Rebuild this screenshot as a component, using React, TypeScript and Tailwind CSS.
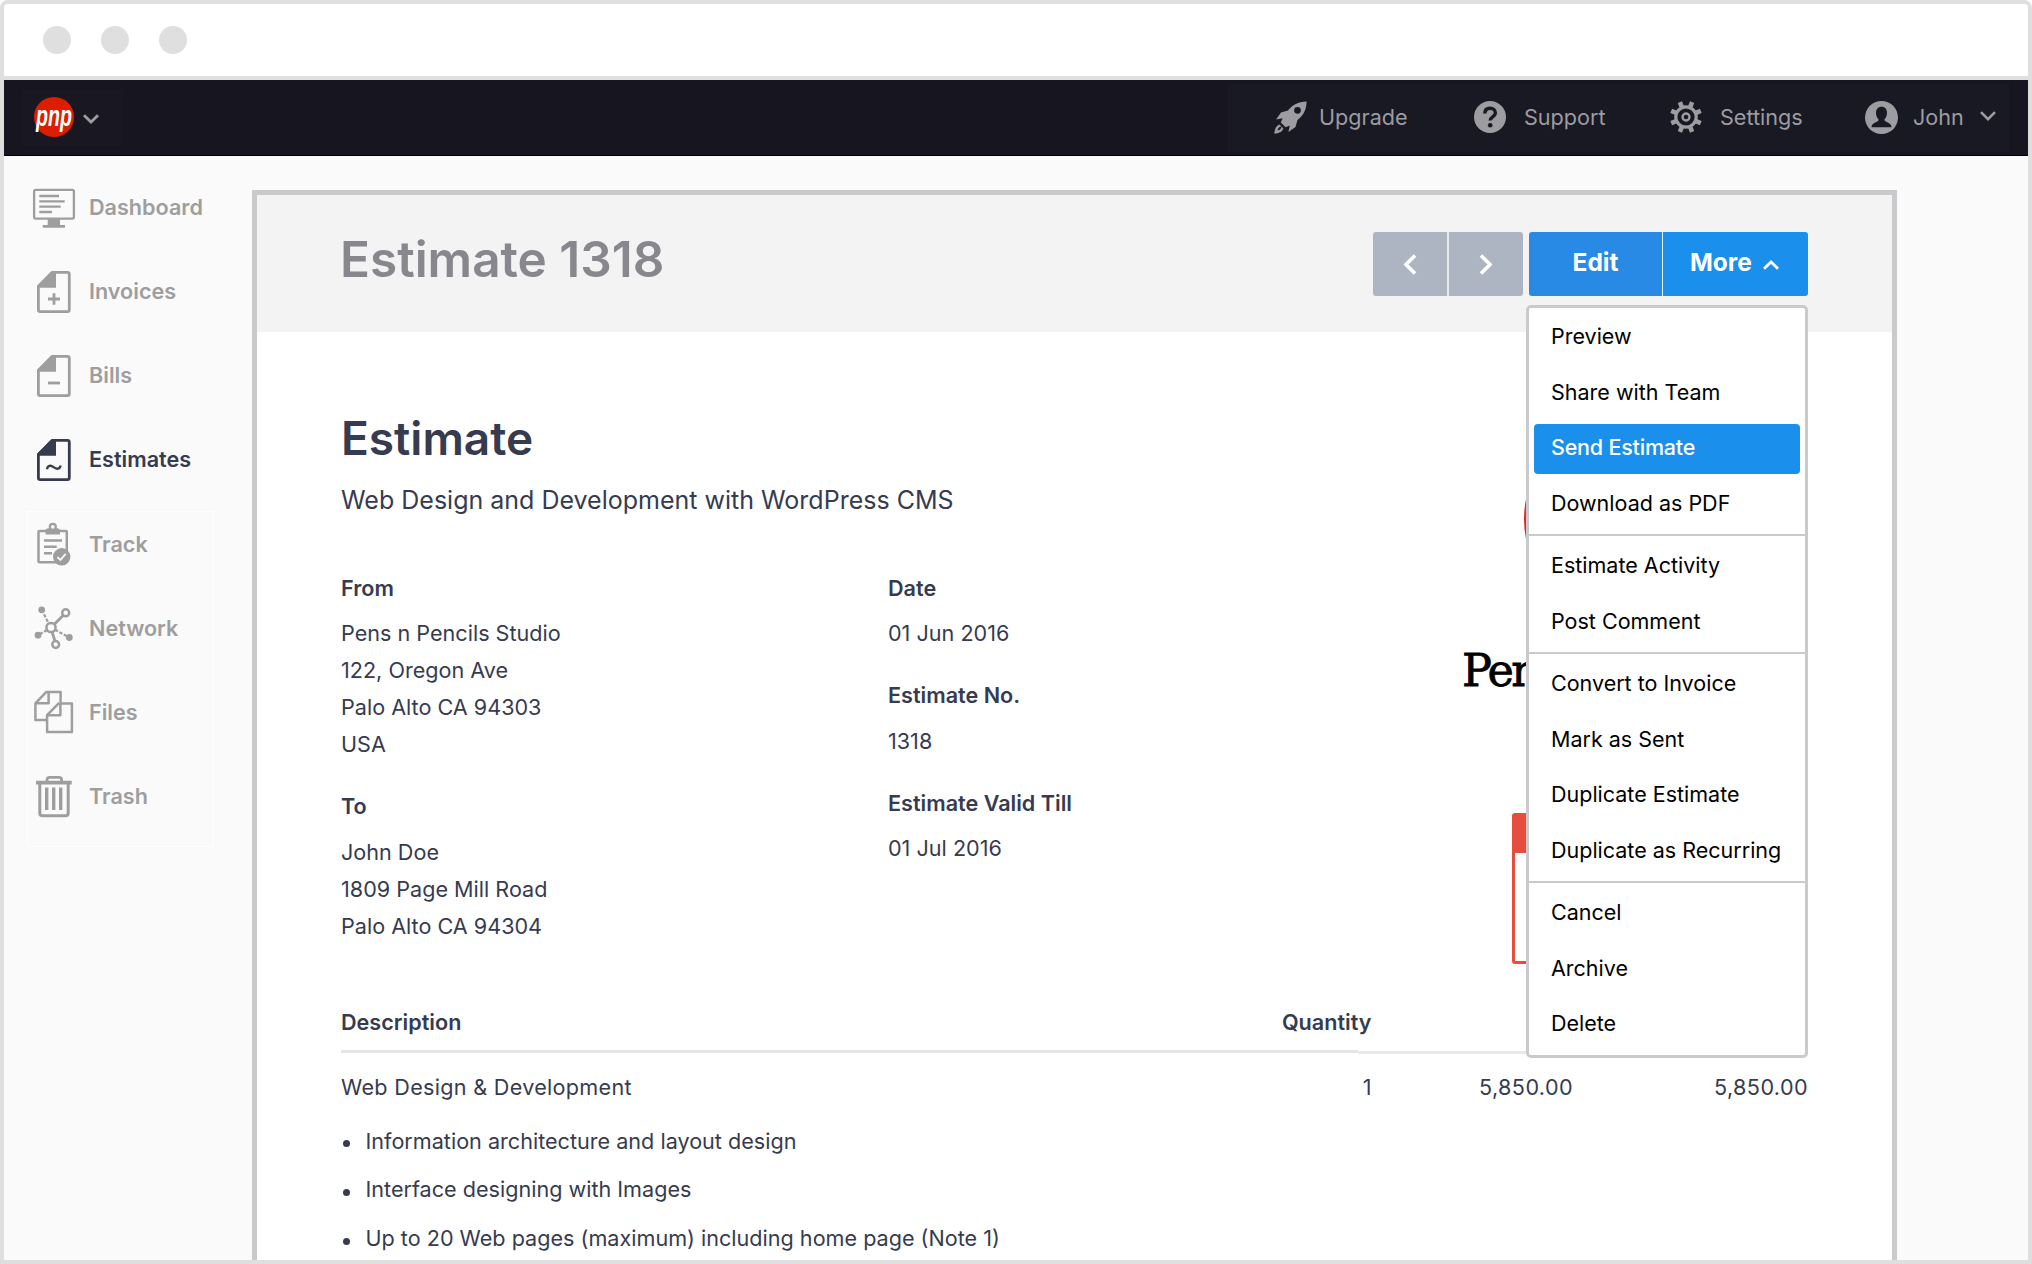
import type { ReactNode } from "react";

const invoiceLines = [
    "Information architecture and layout design",
    "Interface designing with Images",
    "Up to 20 Web pages (maximum) including home page (Note 1)",
];

const menuGroups = [
    ["Preview", "Share with Team", "Send Estimate", "Download as PDF"],
    ["Estimate Activity", "Post Comment"],
    ["Convert to Invoice", "Mark as Sent", "Duplicate Estimate", "Duplicate as Recurring"],
    ["Cancel", "Archive", "Delete"],
];

function Icon({ children }: { children: ReactNode }) {
    return (
        <svg width="42" height="42" viewBox="0 0 42 42" fill="none" stroke="currentColor" strokeWidth="2.8" className="shrink-0 overflow-visible">
            {children}
        </svg>
    );
}

function DocIcon({ children }: { children: ReactNode }) {
    return (
        <Icon>
            <path d="M19 2.4H34.5Q36.3 2.4 36.3 4.2V39.8Q36.3 41.6 34.5 41.6H7.2Q5.4 41.6 5.4 39.8V16.5Z" strokeLinejoin="round" />
            <path d="M19 1.2H23V17.8H4V15.8Z" fill="currentColor" stroke="none" />
            {children}
        </Icon>
    );
}

const mainNav = [
    {
        label: "Dashboard",
        icon: (
            <Icon>
                <rect x="1.1" y="3.8" width="39.8" height="28.8" rx="1.6" strokeWidth="2.3" />
                <path d="M6.3 10H26M6.3 15.3H31.7M6.3 20.7H27.7M6.3 26H19" strokeWidth="2.3" />
                <path d="M14.7 33H27V39H32V41.7H9.7V39H14.7Z" fill="currentColor" stroke="none" />
            </Icon>
        ),
    },
    { label: "Invoices", icon: <DocIcon><path d="M15 29H27M21 23.3V34.7" /></DocIcon> },
    { label: "Bills", icon: <DocIcon><path d="M15 29H27" /></DocIcon> },
    {
        label: "Estimates",
        active: true,
        icon: <DocIcon><path d="M14 31.2C14.6 27.4 17.6 26.8 20.6 29.2S26.8 31.4 27.6 27.4" strokeWidth="2.3" /></DocIcon>,
    },
];

const toolsNav = [
    {
        label: "Track",
        icon: (
            <Icon>
                <rect x="5.5" y="7" width="28.3" height="31.2" rx="1" strokeWidth="2.5" />
                <path d="M12.6 10.6V6.5Q12.6 4.4 15 4.2H24.6Q27 4.4 27 6.5V10.6Z" fill="currentColor" stroke="none" />
                <circle cx="19.8" cy="2.8" r="3" fill="#fafafa" strokeWidth="2.2" />
                <path d="M11 16.5H29M11 22.8H23.7M11 29.2H19" strokeWidth="2.4" />
                <circle cx="28.7" cy="32.8" r="8.7" fill="currentColor" stroke="none" />
                <path d="M24.4 33.2L27.4 36L32.6 29.8" stroke="#fafafa" strokeWidth="1.8" />
            </Icon>
        ),
    },
    {
        label: "Network",
        icon: (
            <Icon>
                <circle cx="18" cy="19.5" r="4.6" strokeWidth="2.5" />
                <circle cx="32.7" cy="4.8" r="3.5" strokeWidth="2.5" />
                <circle cx="22.7" cy="36.5" r="3.4" strokeWidth="2.5" />
                <path d="M21.3 16.2L30.1 7.4M19.1 24L21.9 33" />
                <path d="M8.7 1.8L15.7 15.5M22 21.7L36.3 29.5M14 22L5 27.2" strokeWidth="2.2" strokeDasharray="3.4 1.6" />
                <g fill="currentColor" stroke="none">
                    <circle cx="8.7" cy="1.8" r="3.4" />
                    <circle cx="5" cy="27.2" r="3.4" />
                    <circle cx="36.3" cy="29.5" r="3.4" />
                </g>
            </Icon>
        ),
    },
    {
        label: "Files",
        icon: (
            <Icon>
                <g strokeWidth="2.5" strokeLinejoin="round">
                    <path d="M13 28H2.4V11.3L13.4 -0.1H27.6V10.5M2.4 11.3H15.6V-0.1" />
                    <path d="M14.1 23.2L25.4 11.6H38.9V40.1H14.1ZM14.1 23.2H27.4V11.6" />
                </g>
            </Icon>
        ),
    },
    {
        label: "Trash",
        icon: (
            <Icon>
                <path d="M3 6.6H38.7" strokeWidth="3.6" />
                <path d="M14 5.6V4Q14 1.4 16.6 1.4H26Q28.6 1.4 28.6 4V5.6" />
                <path d="M6.8 8V37Q6.8 39.8 9.6 39.8H32.4Q35.2 39.8 35.2 37V8" strokeWidth="3" />
                <path d="M13.7 11.5V34M20.7 11.5V34M27.7 11.5V34" strokeWidth="3.4" />
            </Icon>
        ),
    },
];

function NavItem({ label, icon, active }: { label: string; icon: ReactNode; active?: boolean }) {
    return (
        <li className={`flex h-[42px] items-center gap-3.5 font-semibold ${active ? "text-[#363b50]" : "text-[#9e9e9e]"}`}>
            {icon}
            <span>{label}</span>
        </li>
    );
}

function Address({ title, lines }: { title: string; lines: string[] }) {
    return (
        <div className="leading-[36.9px]">
            <h3 className="mb-[8.7px] font-semibold">{title}</h3>
            {lines.map((line) => (
                <p key={line}>{line}</p>
            ))}
        </div>
    );
}

function TopBar() {
    return (
        <header className="flex h-[76px] shrink-0 items-center justify-between border-b border-black bg-[#171620] text-[#9d9ca1]">
            <div className="ml-[18px] flex h-14 w-[101px] items-center bg-[#191822] pl-3">
                <svg width="40" height="40" viewBox="0 0 40 40" className="-mt-0.5 overflow-visible">
                    <circle cx="20" cy="20" r="20" fill="#dc1d00" />
                    <text x="2" y="28.5" textLength="36" lengthAdjust="spacingAndGlyphs" fill="#fff" fontFamily="Liberation Sans" fontStyle="italic" fontWeight="700" fontSize="30">pnp</text>
                </svg>
                <svg width="16" height="10" viewBox="0 0 16 10" fill="none" stroke="currentColor" strokeWidth="2.8" className="mt-[3px] ml-[9px]">
                    <path d="M1 1.2L8 8L15 1.2" />
                </svg>
            </div>
            <nav className="mr-[19px] flex h-[68px] w-[781px] items-center bg-[#191923] pb-px pl-[46px]">
                <svg width="33" height="33" viewBox="0 0 33 33" fill="currentColor">
                    <path fillRule="evenodd" d="M32.6 .4C24 .6 18.5 3.6 14 9.5L7 11.5L2 18.5L8.6 17.2L6.8 21.4L11.6 26.2L15.8 24.4L14.4 31L21.5 26L23.5 19C29.4 14.5 32.4 9 32.6 .4ZM23.5 12.7A3.4 3.4 0 1 1 23.5 5.9A3.4 3.4 0 1 1 23.5 12.7Z" />
                    <path d="M5.6 23.6C2 25 .8 28 .3 32.7C5 32.2 8 31 9.4 27.4L7.6 25.6C7.5 28 5.8 29 3.6 29.4C4 27.2 5 25.5 7.4 25.4Z" />
                </svg>
                <span className="ml-3 w-[155px]">Upgrade</span>
                <svg width="32" height="32" viewBox="0 0 32 32">
                    <circle cx="16" cy="16" r="16" fill="currentColor" />
                    <path d="M10.8 12.5C10.8 9 13 7.3 16.1 7.3S21.4 9.2 21.4 12C21.4 15.6 16.2 15.6 16.2 19.6" fill="none" stroke="#191923" strokeWidth="3.4" />
                    <circle cx="16.2" cy="24.2" r="2.3" fill="#191923" />
                </svg>
                <span className="ml-[18px] w-[146px]">Support</span>
                <svg width="32" height="32" viewBox="0 0 32 32" fill="none" stroke="currentColor">
                    <g strokeWidth="4.6">
                        <path d="M16 0V6M16 26V32M0 16H6M26 16H32" transform="rotate(22.5 16 16)" />
                        <path d="M16 0V6M16 26V32M0 16H6M26 16H32" transform="rotate(67.5 16 16)" />
                    </g>
                    <circle cx="16" cy="16" r="10.2" strokeWidth="3.2" />
                    <circle cx="16" cy="16" r="3.5" strokeWidth="2.4" />
                </svg>
                <span className="ml-[18px] w-[145px]">Settings</span>
                <svg width="33" height="33" viewBox="0 0 33 33">
                    <circle cx="16.5" cy="16.5" r="16.5" fill="currentColor" />
                    <path d="M16.5 5.8C20.2 5.8 22 8.4 22 12C22 14.8 20.8 17 19.3 18.6C19.3 21.4 26.5 21.5 26.5 26.3H6.5C6.5 21.5 13.7 21.4 13.7 18.6C12.2 17 11 14.8 11 12C11 8.4 12.8 5.8 16.5 5.8Z" fill="#191923" />
                </svg>
                <span className="ml-[15px] w-[67px]">John</span>
                <svg width="16" height="10" viewBox="0 0 16 10" fill="none" stroke="currentColor" strokeWidth="2.6" className="-mt-0.5">
                    <path d="M1 1.2L8 8.2L15 1.2" />
                </svg>
            </nav>
        </header>
    );
}

function MoreMenu() {
    return (
        <div className="absolute top-[73px] right-0 z-10 w-[282px] rounded-[5px] border-[3px] border-[#cacacc] bg-white py-0.5 text-[21.5px] font-normal whitespace-nowrap text-black">
            {menuGroups.map((group, i) => (
                <ul key={i} className={i > 0 ? "mt-0.5 border-t-2 border-[#cacacc] pt-[2.6px]" : ""}>
                    {group.map((item) => (
                        <li key={item} className="h-[55.6px] px-[5px] py-[2.8px]">
                            <div className={`flex h-[50px] items-center rounded-[4px] pb-0.5 pl-[17px] ${item === "Send Estimate" ? "bg-[#1a8feb] font-medium tracking-[-0.2px] text-white" : ""}`}>
                                {item}
                            </div>
                        </li>
                    ))}
                </ul>
            ))}
        </div>
    );
}

function EstimateHeader() {
    return (
        <div className="flex h-[137px] items-start justify-between bg-[#f3f3f3] pr-[84px] pl-[83px]">
            <h1 className="pt-[34px] text-[49.5px] leading-[61px] font-semibold text-[#88878e]">Estimate 1318</h1>
            <div className="relative mt-[37px] flex h-16 text-[24.5px] font-bold text-white">
                <button className="flex w-[76px] items-center justify-center rounded-l-[3px] border-r-2 border-[#e6e9ed] bg-[#adb5c2]">
                    <svg width="14" height="21" viewBox="0 0 14 21" fill="none" stroke="currentColor" strokeWidth="3.6"><path d="M12 1.5L3 10.5L12 19.5" /></svg>
                </button>
                <button className="flex w-[74px] items-center justify-center rounded-r-[3px] bg-[#adb5c2]">
                    <svg width="14" height="21" viewBox="0 0 14 21" fill="none" stroke="currentColor" strokeWidth="3.6"><path d="M2 1.5L11 10.5L2 19.5" /></svg>
                </button>
                <button className="ml-1.5 w-[134px] rounded-l-[3px] border-r border-[#e3f1fc] bg-[#298ae5] pb-[3px]">Edit</button>
                <button className="flex w-[145px] items-center rounded-r-[3px] bg-[#1a8feb] pb-[3px] pl-[27px]">
                    More
                    <svg width="16" height="10" viewBox="0 0 16 10" fill="none" stroke="currentColor" strokeWidth="2.8" className="mt-1 ml-[11px]"><path d="M1 8.800L8 2L15 8.800" /></svg>
                </button>
                <MoreMenu />
            </div>
        </div>
    );
}

export default function App() {
    return (
        <div className="flex h-[1264px] w-[2032px] flex-col overflow-hidden rounded-t-[8px] border-4 border-[#dfdfdf] bg-[#fafafa] font-[Inter,sans-serif] text-[21.6px] leading-[37px] text-[#363b50]">
            <div className="flex h-[76px] shrink-0 items-center gap-[30px] border-b-4 border-[#dfdfdf] bg-white pl-[39px]">
                <span className="size-7 rounded-full bg-[#dfdfdf]" />
                <span className="size-7 rounded-full bg-[#dfdfdf]" />
                <span className="size-7 rounded-full bg-[#dfdfdf]" />
            </div>
            <TopBar />
            <div className="flex min-h-0 flex-1">
                <aside className="w-[248px] shrink-0 pt-[30px]">
                    <ul className="ml-[29px] flex flex-col gap-[42px]">
                        {mainNav.map((item) => <NavItem key={item.label} {...item} />)}
                    </ul>
                    <ul className="mt-[31px] ml-[23px] flex h-[336px] w-[187px] flex-col gap-[42px] border border-white pt-[11.5px] pl-[5px]">
                        {toolsNav.map((item) => <NavItem key={item.label} {...item} />)}
                    </ul>
                </aside>
                <main className="mt-[34px] w-[1645px] overflow-hidden border-[5px] border-b-0 border-[#cacacc] bg-white">
                    <EstimateHeader />
                    <section className="px-[84px]">
                        <div className="flex justify-between">
                            <div className="pt-[78px]">
                                <h2 className="text-[46px] leading-[56px] font-semibold">Estimate</h2>
                                <p className="mt-[15.5px] text-[25px] leading-[36px]">Web Design and Development with WordPress CMS</p>
                                <div className="mt-[52.4px] grid grid-cols-[547px_300px]">
                                    <div className="space-y-[25px]">
                                        <Address title="From" lines={["Pens n Pencils Studio", "122, Oregon Ave", "Palo Alto CA 94303", "USA"]} />
                                        <Address title="To" lines={["John Doe", "1809 Page Mill Road", "Palo Alto CA 94304"]} />
                                    </div>
                                    <div className="space-y-[25px]">
                                        <Address title="Date" lines={["01 Jun 2016"]} />
                                        <Address title="Estimate No." lines={["1318"]} />
                                        <Address title="Estimate Valid Till" lines={["01 Jul 2016"]} />
                                    </div>
                                </div>
                            </div>
                            <div className="mr-[22px] flex w-[324px] flex-col items-center pt-[87px]">
                                <div className="size-[200px] rounded-full bg-[#dc2a1c]" />
                                <p className="mt-[27px] w-full font-['DejaVu_Serif',serif] text-[44.5px] leading-[50px] tracking-[-2.5px] text-black [-webkit-text-stroke:0.8px_#000]">Pen</p>
                                <div className="mt-[117px] h-[151px] w-56 rounded-[3px] border-[3px] border-t-[40px] border-[#e64d3d]" />
                            </div>
                        </div>
                        <div className="mt-[39.7px] grid grid-cols-[1fr_200px_201.5px_235px] pb-[9.3px] font-semibold">
                            <span>Description</span>
                            <span className="text-right">Quantity</span>
                        </div>
                        <div className="flex items-start">
                            <div className="h-[3px] w-[1017px] bg-[#e5e5e5]" />
                            <div className="mt-px h-[3px] flex-1 bg-[#e8e8e8]" />
                        </div>
                        <div className="mt-[14.7px] grid grid-cols-[1fr_200px_201.5px_235px]">
                            <span className="tracking-[0.3px]">Web Design &amp; Development</span>
                            <span className="text-right">1</span>
                            <span className="text-right tracking-[0.4px]">5,850.00</span>
                            <span className="text-right tracking-[0.4px]">5,850.00</span>
                        </div>
                        <ul className="mt-[17px] flex flex-col gap-[11.7px]">
                            {invoiceLines.map((line) => (
                                <li key={line} className="flex items-center">
                                    <span className="mt-[5px] mr-4 ml-[1.5px] size-[7px] rounded-full bg-[#363b50]" />
                                    {line}
                                </li>
                            ))}
                        </ul>
                    </section>
                </main>
            </div>
        </div>
    );
}
